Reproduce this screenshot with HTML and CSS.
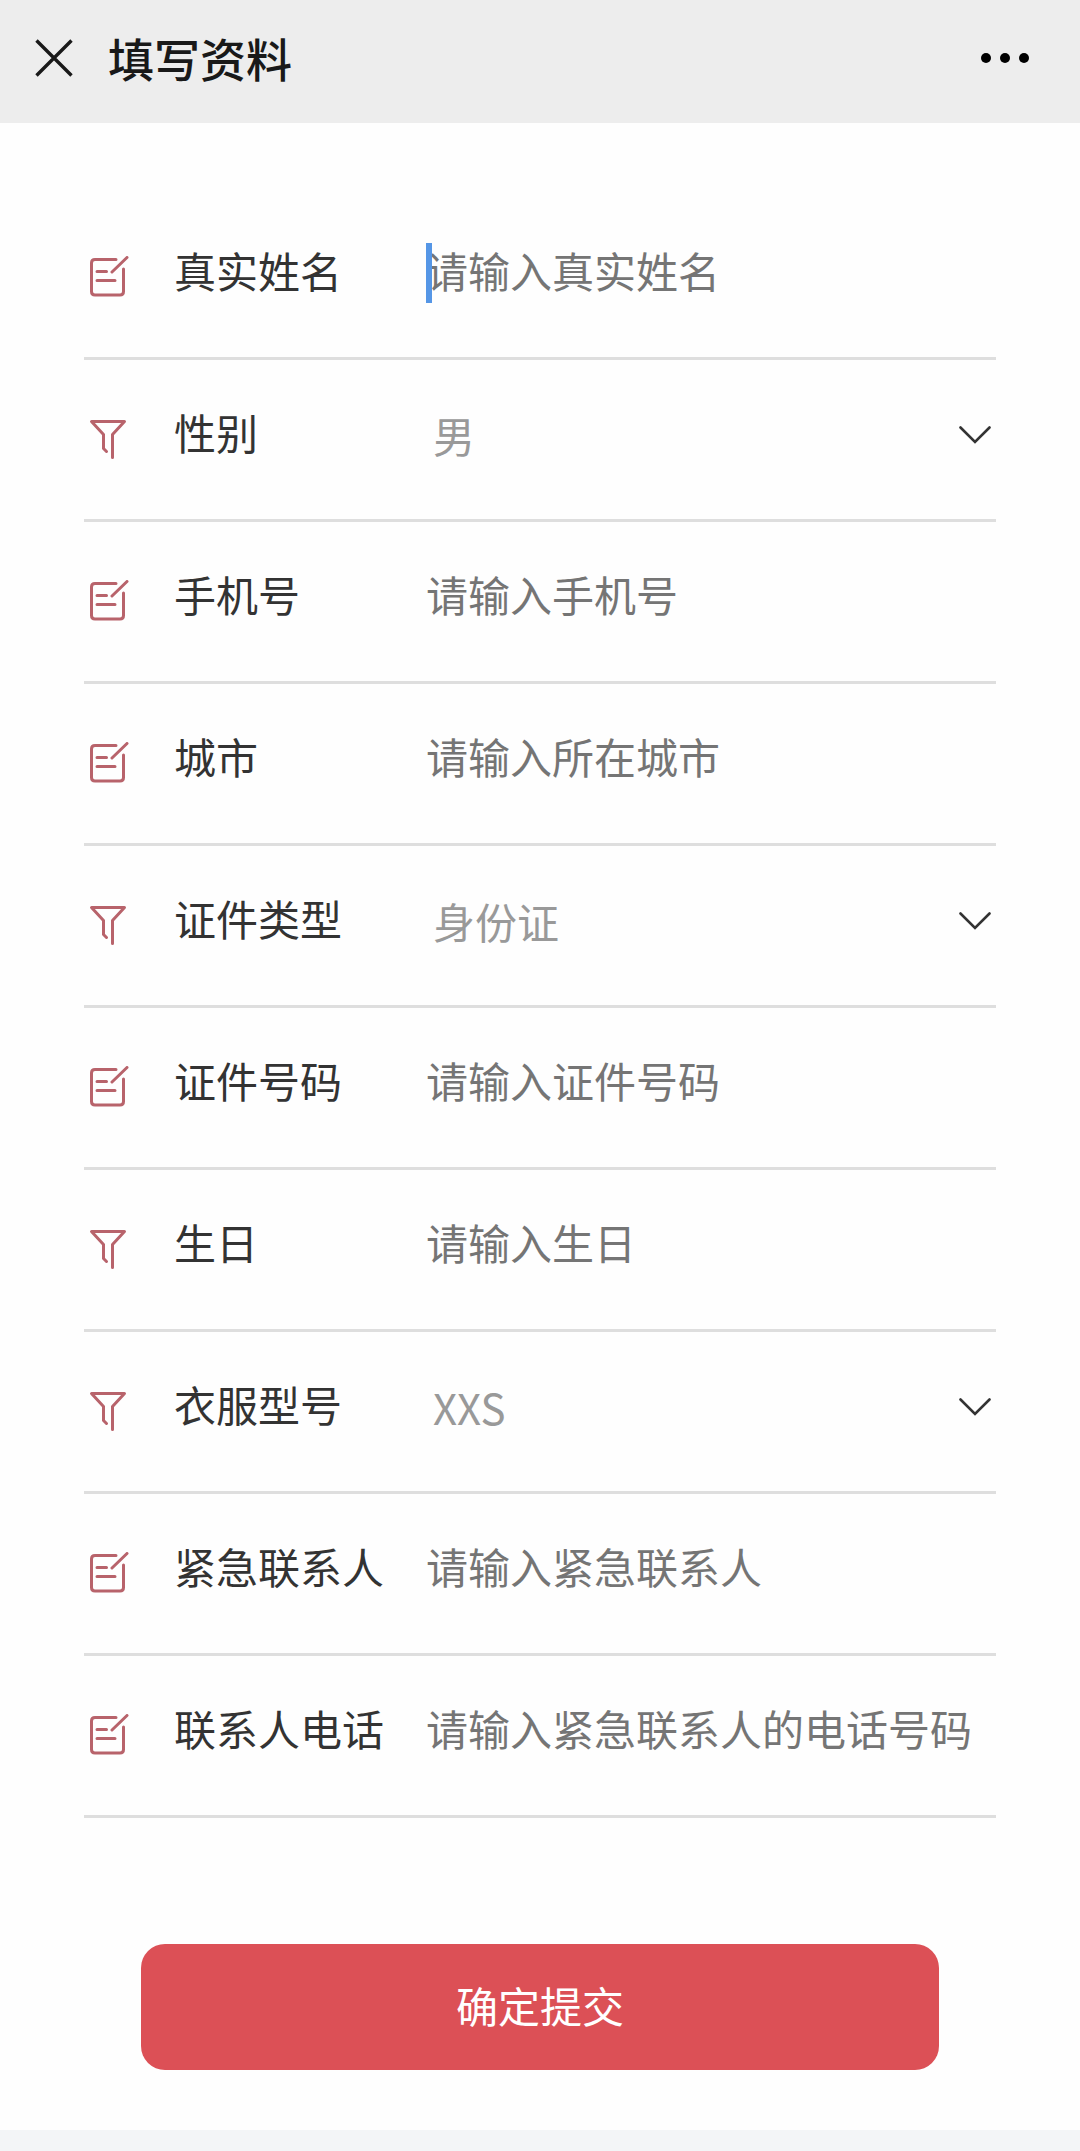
FILE: index.html
```
<!DOCTYPE html>
<html lang="zh-CN">
  <head>
    <meta charset="utf-8" />
    <meta name="viewport" content="width=device-width, initial-scale=1.0" />
    <title>填写资料</title>
    <link rel="stylesheet" href="styles.css" />
  </head>

  <body>
    <!-- 图标 -->
    <svg class="icon-defs" width="0" height="0">
      <symbol id="icon-edit" viewBox="0 0 42 42">
        <path d="M27 3.5H6Q2.5 3.5 2.5 7V35.5Q2.5 39 6 39H31Q34.5 39 34.5 35.5V13" />
        <path d="M23 16L38 1.5M8 15.5H17.5M8 24.5H26" />
      </symbol>
      <symbol id="icon-filter" viewBox="0 0 42 42">
        <path d="M17.5 33.5L14.5 30.5V16.5L2.5 3.5H35.5L23.5 16.5V39.5" />
      </symbol>
      <symbol id="icon-down" viewBox="0 0 32 18">
        <path d="M1.5 1.5L16 16L30.5 1.5" />
      </symbol>
    </svg>

    <!-- 顶部导航 -->
    <header class="nav">
      <svg class="nav-close" viewBox="0 0 38 38">
        <path d="M1.5 1.5L36.5 36.5M36.5 1.5L1.5 36.5" />
      </svg>
      <h1 class="nav-title">填写资料</h1>
      <div class="nav-more"><i></i><i></i><i></i></div>
    </header>

    <form class="form">
      <div class="form-item">
        <svg class="icon"><use href="#icon-edit" /></svg>
        <label class="label">真实姓名</label>
        <div class="field">
          <input type="text" placeholder="请输入真实姓名" />
          <span class="caret"></span>
        </div>
      </div>
      <div class="form-item">
        <svg class="icon"><use href="#icon-filter" /></svg>
        <label class="label">性别</label>
        <div class="field">
          <select><option>男</option><option>女</option></select>
          <svg class="arrow"><use href="#icon-down" /></svg>
        </div>
      </div>
      <div class="form-item">
        <svg class="icon"><use href="#icon-edit" /></svg>
        <label class="label">手机号</label>
        <div class="field"><input type="text" placeholder="请输入手机号" /></div>
      </div>
      <div class="form-item">
        <svg class="icon"><use href="#icon-edit" /></svg>
        <label class="label">城市</label>
        <div class="field"><input type="text" placeholder="请输入所在城市" /></div>
      </div>
      <div class="form-item">
        <svg class="icon"><use href="#icon-filter" /></svg>
        <label class="label">证件类型</label>
        <div class="field">
          <select><option>身份证</option></select>
          <svg class="arrow"><use href="#icon-down" /></svg>
        </div>
      </div>
      <div class="form-item">
        <svg class="icon"><use href="#icon-edit" /></svg>
        <label class="label">证件号码</label>
        <div class="field"><input type="text" placeholder="请输入证件号码" /></div>
      </div>
      <div class="form-item">
        <svg class="icon"><use href="#icon-filter" /></svg>
        <label class="label">生日</label>
        <div class="field"><input type="text" placeholder="请输入生日" /></div>
      </div>
      <div class="form-item">
        <svg class="icon"><use href="#icon-filter" /></svg>
        <label class="label">衣服型号</label>
        <div class="field">
          <select><option>XXS</option></select>
          <svg class="arrow"><use href="#icon-down" /></svg>
        </div>
      </div>
      <div class="form-item">
        <svg class="icon"><use href="#icon-edit" /></svg>
        <label class="label">紧急联系人</label>
        <div class="field"><input type="text" placeholder="请输入紧急联系人" /></div>
      </div>
      <div class="form-item">
        <svg class="icon"><use href="#icon-edit" /></svg>
        <label class="label">联系人电话</label>
        <div class="field">
          <input type="text" placeholder="请输入紧急联系人的电话号码" />
        </div>
      </div>

      <button class="submit" type="button">确定提交</button>
    </form>
  </body>
</html>
```

FILE: styles.css
```
* {
  box-sizing: border-box;
}

body {
  margin: 0;
  min-height: 100vh;
  background: #f3f5f7;
  font-family: "Noto Sans CJK SC", sans-serif;
  font-size: 42px;
  color: #333;
}

.icon-defs {
  display: none;
}

/* 顶部导航 */
.nav {
  display: flex;
  align-items: center;
  height: 123px;
  padding: 0 51px 7px 35px;
  background: #ededed;
}

.nav-close {
  width: 38px;
  height: 38px;
  fill: none;
  stroke: #191919;
  stroke-width: 3.4;
}

.nav-title {
  margin: 0 0 2px 35px;
  font-size: 46px;
  line-height: 60px;
  font-weight: 500;
  color: #191919;
}

.nav-more {
  display: flex;
  gap: 9px;
  margin-left: auto;
}

.nav-more i {
  width: 10px;
  height: 10px;
  border-radius: 50%;
  background: #000;
}

/* 表单 */
.form {
  height: 2007px;
  padding: 75px 84px 0;
  background: #fefefe;
}

.form-item {
  display: flex;
  align-items: flex-start;
  height: 162px;
  padding-top: 42px;
  border-bottom: 3px solid #dedede;
}

.icon {
  width: 42px;
  height: 42px;
  margin: 16px 0 0 5px;
  fill: none;
  stroke: #b8636b;
  stroke-width: 3;
  stroke-linecap: round;
  stroke-linejoin: round;
}

.label {
  width: 252px;
  margin-left: 43px;
  line-height: 60px;
  white-space: nowrap;
}

.field {
  position: relative;
  display: flex;
  flex: 1;
  height: 60px;
}

.field input,
.field select {
  flex: 1;
  min-width: 0;
  height: 60px;
  padding: 0;
  border: none;
  outline: none;
  background: none;
  font: inherit;
  line-height: 60px;
}

.field input::placeholder {
  color: #757575;
  opacity: 1;
}

.field select {
  height: 66px;
  padding-left: 7px;
  color: #999;
  appearance: none;
}

.arrow {
  width: 32px;
  height: 18px;
  margin: 24px 5px 0 0;
  fill: none;
  stroke: #333;
  stroke-width: 2.6;
  stroke-linecap: round;
}

/* 输入光标 */
.caret {
  position: absolute;
  left: 0;
  top: 3px;
  width: 6px;
  height: 60px;
  background: #5596e6;
}

.submit {
  display: block;
  width: 798px;
  height: 126px;
  margin: 126px auto 0;
  padding: 0 0 6px;
  border: none;
  border-radius: 24px;
  background: #dc5056;
  font: inherit;
  color: #fff;
}
```
